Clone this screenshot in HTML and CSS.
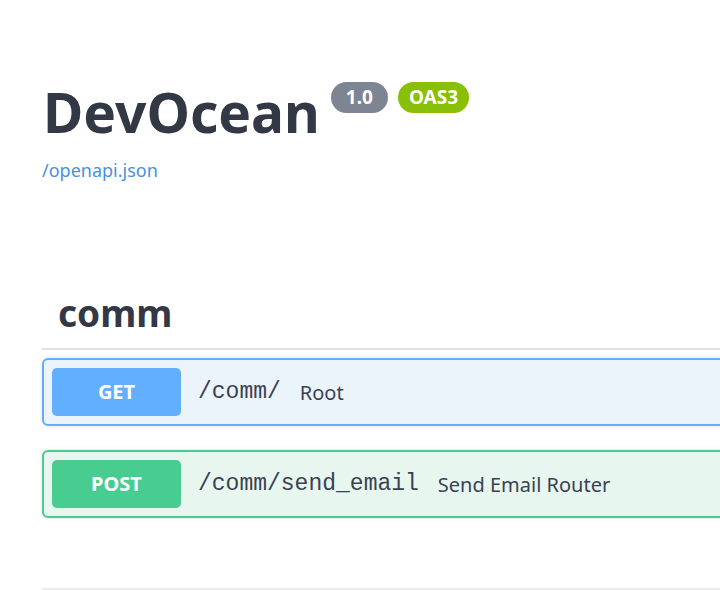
FILE: index.html
```html
<!DOCTYPE html>
<html lang="en">
  <head>
    <meta charset="UTF-8" />
    <meta name="viewport" content="width=device-width, initial-scale=1.0" />
    <title>DevOcean</title>
    <link rel="stylesheet" href="styles.css">
  </head>
  <body>
    <div class="wrapper">
      <header class="info">
        <h1 class="title">
          DevOcean
          <span class="badges">
            <span class="badge badge-version">1.0</span>
            <span class="badge badge-oas">OAS3</span>
          </span>
        </h1>
        <a href="#" class="spec-link">/openapi.json</a>
      </header>

      <section class="tag-section">
        <h2 class="tag-title">comm</h2>
        <div class="opblock opblock-get">
          <span class="method">GET</span>
          <span class="path">/comm/</span>
          <span class="summary">Root</span>
        </div>
        <div class="opblock opblock-post">
          <span class="method">POST</span>
          <span class="path">/comm/send_email</span>
          <span class="summary">Send Email Router</span>
        </div>
      </section>

      <div class="bottom-rule"></div>
    </div>
  </body>
</html>
```

FILE: styles.css
```css
* {
  padding: 0;
  margin: 0;
  box-sizing: border-box;
}

body {
  font-family: "Noto Sans", "Open Sans", sans-serif;
  color: #3b4151;
  background-color: #fff;
  overflow: hidden;
}

.wrapper {
  width: 820px;
  padding: 72px 0 0 42px;
}

.info {
  padding-bottom: 106px;
}

.title {
  display: flex;
  align-items: flex-start;
  font-size: 55px;
  font-weight: 700;
  line-height: 80px;
  color: #333845;
  margin-left: 1px;
}

.badges {
  display: flex;
  gap: 10px;
  margin-left: 11px;
  margin-top: 10px;
}

.badge {
  display: inline-block;
  height: 31px;
  padding: 0 11px;
  border-radius: 16px;
  font-size: 19px;
  line-height: 31px;
  font-weight: 700;
  color: #fff;
}

.badge-version {
  padding: 0 15px;
  background: #7d8492;
}

.badge-oas {
  background: #89bf04;
}

.spec-link {
  display: block;
  margin-top: 6px;
  font-size: 18px;
  color: #4990e2;
  text-decoration: none;
}

.tag-title {
  font-size: 37px;
  font-weight: 700;
  line-height: 50px;
  padding: 0 0 10px 16px;
  color: #333845;
  border-bottom: 2px solid #e2e2e4;
}

.opblock {
  display: flex;
  align-items: center;
  height: 68px;
  padding: 0 8px;
  margin-top: 8px;
  border: 2px solid;
  border-radius: 6px;
  box-shadow: 0 0 4px rgba(0, 0, 0, 0.12);
}

.opblock + .opblock {
  margin-top: 24px;
}

.opblock-get {
  background: #ebf3fb;
  border-color: #61affe;
}

.opblock-post {
  background: #e8f6f0;
  border-color: #49cc90;
}

.method {
  width: 129px;
  height: 48px;
  border-radius: 5px;
  font-size: 20px;
  font-weight: 700;
  line-height: 48px;
  text-align: center;
  color: #fff;
}

.opblock-get .method {
  background: #61affe;
}

.opblock-post .method {
  background: #49cc90;
}

.path {
  margin-left: 17px;
  font-family: "Liberation Mono", monospace;
  font-size: 23px;
  color: #3b4151;
}

.summary {
  margin-left: 19px;
  font-size: 20px;
  color: #3b4151;
}

.bottom-rule {
  margin-top: 70px;
  border-top: 2px solid #ececec;
}
```
